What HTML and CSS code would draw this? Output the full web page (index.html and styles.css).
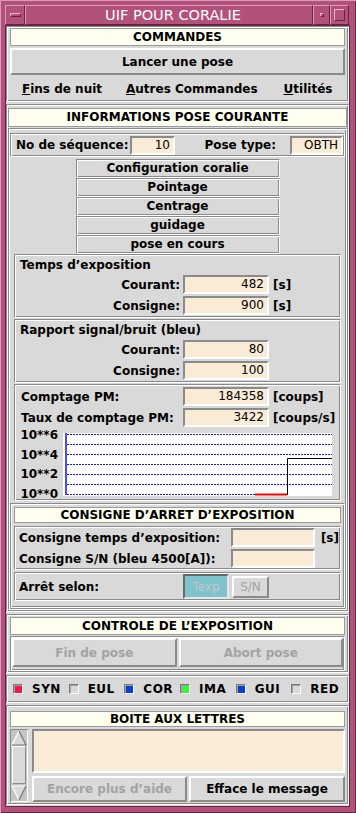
FILE: index.html
```html
<!DOCTYPE html>
<html>
<head>
    <meta charset="UTF-8">
    <title>UIF POUR CORALIE</title>
    <link rel="stylesheet" href="styles.css">
</head>
<body>
<div class="window">
    <div class="titlebar">
        <div class="wm-btn wm-menu"><span class="wm-bar"></span></div>
        <div class="wm-title">UIF POUR CORALIE</div>
        <div class="wm-btn wm-min"><span class="wm-dot"></span></div>
        <div class="wm-btn wm-max"><span class="wm-box"></span></div>
    </div>

    <div class="client">
        <!-- commandes -->
        <div class="group cmd">
            <div class="header">COMMANDES</div>
            <button class="btn big">Lancer une pose</button>
            <div class="menubar">
                <span class="m1"><u>F</u>ins de nuit</span>
                <span class="m2"><u>A</u>utres Commandes</span>
                <span class="m3"><u>U</u>tilités</span>
            </div>
        </div>

        <!-- informations pose courante -->
        <div class="group info">
            <div class="header h19">INFORMATIONS POSE COURANTE</div>
            <div class="frame info-body">
                <div class="frame seq-row">
                    <span class="seq-lbl">No de séquence:</span>
                    <span class="field seq">10</span>
                    <span class="pose-lbl">Pose type:</span>
                    <span class="field pose">OBTH</span>
                </div>

                <div class="tabs">
                    <div class="tab">Configuration coralie</div>
                    <div class="tab">Pointage</div>
                    <div class="tab">Centrage</div>
                    <div class="tab">guidage</div>
                    <div class="tab">pose en cours</div>
                </div>

                <div class="frame sub">
                    <div class="sub-title">Temps d’exposition</div>
                    <div class="row r1"><span class="rlbl">Courant:</span><span class="field num">482</span><span class="unit">[s]</span></div>
                    <div class="row r2"><span class="rlbl">Consigne:</span><span class="field num">900</span><span class="unit">[s]</span></div>
                </div>

                <div class="frame sub">
                    <div class="sub-title">Rapport signal/bruit (bleu)</div>
                    <div class="row r1"><span class="rlbl">Courant:</span><span class="field num">80</span></div>
                    <div class="row r2"><span class="rlbl">Consigne:</span><span class="field num">100</span></div>
                </div>

                <div class="frame sub pm">
                    <div class="row r1"><span class="rlbl left">Comptage PM:</span><span class="field num">184358</span><span class="unit">[coups]</span></div>
                    <div class="row r2"><span class="rlbl left">Taux de comptage PM:</span><span class="field num">3422</span><span class="unit">[coups/s]</span></div>
                    <svg class="graph" width="324" height="74" viewBox="0 0 324 74">
                        <rect x="47" y="6" width="269" height="63" fill="#ffffff"/>
                        <g stroke="#1414ff" stroke-width="1" stroke-dasharray="2 1">
                            <line x1="51" y1="7.5" x2="316" y2="7.5"/>
                            <line x1="51" y1="17.5" x2="316" y2="17.5"/>
                            <line x1="51" y1="27.5" x2="316" y2="27.5"/>
                            <line x1="51" y1="37.5" x2="316" y2="37.5"/>
                            <line x1="51" y1="47.5" x2="316" y2="47.5"/>
                            <line x1="51" y1="57.5" x2="316" y2="57.5"/>
                            <line x1="51" y1="67.5" x2="239" y2="67.5"/>
                        </g>
                        <rect x="49" y="6" width="2" height="62" fill="#4a4aff"/>
                        <rect x="239" y="66.5" width="32" height="2" fill="#ff0000"/>
                        <polyline points="271.5,68 271.5,31.5 316,31.5" fill="none" stroke="#000" stroke-width="1"/>
                        <g class="axis">
                            <text x="42" y="12" text-anchor="end">10**6</text>
                            <text x="42" y="32" text-anchor="end">10**4</text>
                            <text x="42" y="51" text-anchor="end">10**2</text>
                            <text x="42" y="71" text-anchor="end">10**0</text>
                        </g>
                    </svg>
                </div>

                <div class="frame stop">
                    <div class="header h16">CONSIGNE D’ARRET D’EXPOSITION</div>
                    <div class="frame stop-vals">
                        <div class="row"><span class="slbl">Consigne temps d’exposition:</span><span class="field sfield"></span><span class="unit su">[s]</span></div>
                        <div class="row r2"><span class="slbl">Consigne S/N (bleu 4500[A]):</span><span class="field sfield"></span></div>
                    </div>
                    <div class="frame stop-mode">
                        <span class="mlbl">Arrêt selon:</span>
                        <span class="texp">Texp</span>
                        <span class="sn">S/N</span>
                    </div>
                </div>
            </div>
        </div>

        <!-- controle -->
        <div class="group ctl">
            <div class="header">CONTROLE DE L’EXPOSITION</div>
            <div class="frame ctl-btns">
                <button class="btn off">Fin de pose</button>
                <button class="btn off">Abort pose</button>
            </div>
        </div>

        <!-- etats -->
        <div class="group status">
            <span class="led"><i class="sq red"></i>SYN</span>
            <span class="led"><i class="sq"></i>EUL</span>
            <span class="led"><i class="sq blue"></i>COR</span>
            <span class="led"><i class="sq green"></i>IMA</span>
            <span class="led"><i class="sq blue"></i>GUI</span>
            <span class="led"><i class="sq"></i>RED</span>
        </div>

        <!-- boite aux lettres -->
        <div class="group mail">
            <div class="header h16">BOITE AUX LETTRES</div>
            <div class="mail-row">
                <svg class="scroll" width="18" height="73" viewBox="0 0 18 73">
                    <rect x="0" y="0" width="18" height="73" fill="#c4c4c4"/>
                    <path d="M0.5 73 V0.5 H18" fill="none" stroke="#8a8a8a"/>
                    <path d="M1 72.5 H17.5 V1" fill="none" stroke="#ffffff"/>
                    <polygon points="9,2 16,16 2,16" fill="#d9d9d9"/>
                    <path d="M2 16 L9 2" stroke="#ffffff" stroke-width="1.2"/>
                    <path d="M9 2 L16 16 H2" fill="none" stroke="#7a7a7a" stroke-width="1.2"/>
                    <rect x="2" y="17" width="14" height="38" fill="#d9d9d9"/>
                    <path d="M2.5 55 V17.5 H16" fill="none" stroke="#ffffff"/>
                    <path d="M2.5 54.5 H15.5 V17.5" fill="none" stroke="#8a8a8a"/>
                    <polygon points="2,57 16,57 9,71" fill="#d9d9d9"/>
                    <path d="M9 71 L2 57 H16" fill="none" stroke="#ffffff" stroke-width="1.2"/>
                    <path d="M16 57 L9 71" stroke="#7a7a7a" stroke-width="1.2"/>
                </svg>
                <div class="mail-main">
                    <div class="field mail-text"></div>
                    <div class="mail-btns">
                        <button class="btn off">Encore plus d’aide</button>
                        <button class="btn">Efface le message</button>
                    </div>
                </div>
            </div>
        </div>
    </div>
</div>
</body>
</html>
```

FILE: styles.css
```css
* {
    box-sizing: border-box;
}

body {
    margin: 0;
    background: #b3517d;
    font-family: "DejaVu Sans", Verdana, sans-serif;
    font-size: 12px;
    font-weight: bold;
    color: #000;
}

/* window manager frame */
.window {
    width: 356px;
    height: 813px;
    padding: 0 7px 7px 6px;
    display: flex;
    flex-direction: column;
    background: #b3517d;
    box-shadow: inset 1px 1px #dc9bba, inset -1px -1px #6a2244;
}

.titlebar {
    display: flex;
    height: 26px;
    padding: 5px 0 1px;
    margin-left: -1px;
}

.wm-btn,
.wm-title {
    height: 20px;
    border: 1px solid;
    border-color: #dc9bba #6a2244 #6a2244 #dc9bba;
    display: flex;
    align-items: center;
    justify-content: center;
}

.wm-menu {
    width: 20px;
}

.wm-bar {
    width: 11px;
    height: 4px;
    border: 1px solid;
    border-color: #e8b3cb #6a2244 #6a2244 #e8b3cb;
}

.wm-title {
    flex: 1;
    padding-left: 8px;
    color: #fff;
    font-weight: normal;
    font-size: 14.5px;
}

.wm-min {
    width: 17px;
}

.wm-dot {
    width: 4px;
    height: 4px;
    border: 1px solid;
    border-color: #e8b3cb #6a2244 #6a2244 #e8b3cb;
}

.wm-max {
    width: 19px;
}

.wm-box {
    width: 11px;
    height: 12px;
    border: 1px solid;
    border-color: #e8b3cb #6a2244 #6a2244 #e8b3cb;
}

/* client area */
.client {
    flex: 1;
    display: flex;
    flex-direction: column;
    gap: 2px;
    background: #d9d9d9;
    outline: 1px solid #6a2244;
}

.group,
.frame,
.tab {
    border: 1px solid;
    border-color: #8a8a8a #fff #fff #8a8a8a;
    box-shadow: inset 1px 1px #fff, inset -1px -1px #8a8a8a;
    padding: 1px;
}

.header {
    height: 18px;
    line-height: 16px;
    background: #fffff0;
    border: 1px solid #9a9a9a;
    text-align: center;
}

.h19 {
    height: 19px;
    line-height: 17px;
}

.h16 {
    height: 16px;
    line-height: 14px;
}

.btn {
    display: block;
    font-family: inherit;
    font-size: 12px;
    font-weight: bold;
    color: #000;
    background: #d9d9d9;
    border: 2px solid;
    border-color: #fff #8a8a8a #8a8a8a #fff;
    padding: 0;
}

.btn.off {
    color: #a3a3a3;
}

.field {
    display: block;
    height: 19px;
    line-height: 15px;
    padding-right: 3px;
    background: #faebd7;
    border: 2px solid;
    border-color: #8a8a8a #fff #fff #8a8a8a;
    font-weight: normal;
    text-align: right;
}

/* commandes */
.cmd {
    height: 76px;
    padding: 1px 3px;
}

.big {
    width: 100%;
    height: 27px;
    margin-top: 2px;
}

.menubar {
    display: flex;
    align-items: center;
    height: 25px;
    padding-top: 3px;
}

.m1 {
    margin-left: 12px;
}

.m2 {
    margin-left: 24px;
}

.m3 {
    margin-left: 26px;
}

/* informations pose courante */
.info {
    height: 508px;
    padding: 3px 1px 1px;
}

.info-body {
    height: 482px;
    margin-top: 1px;
    padding: 4px 1px 1px;
}

.seq-row {
    display: flex;
    align-items: center;
    height: 24px;
    padding-left: 5px;
}

.seq-lbl {
    width: 114px;
}

.seq {
    width: 45px;
}

.pose-lbl {
    margin-left: auto;
    margin-right: 14px;
}

.pose {
    width: 53px;
    height: 19px;
}

.tabs {
    display: flex;
    flex-direction: column;
    align-items: center;
    height: 95px;
    margin-top: 2px;
}

.tab {
    width: 204px;
    height: 19px;
    line-height: 15px;
    text-align: center;
}

.sub {
    height: 64px;
    margin: 0 4px;
    padding: 1px 1px 0;
}

.sub + .sub {
    margin-top: 1px;
}

.sub-title {
    height: 18px;
    line-height: 18px;
    padding-left: 4px;
}

.row {
    display: flex;
    align-items: center;
    height: 19px;
}

.sub .r1 {
    margin-top: 1px;
}

.row.r2 {
    margin-top: 2px;
}

.rlbl {
    width: 164px;
    text-align: right;
}

.rlbl.left {
    text-align: left;
    padding-left: 5px;
}

.num {
    width: 86px;
    margin-left: 3px;
}

.unit {
    margin-left: 4px;
}

.pm {
    height: 117px;
}

.graph {
    display: block;
}

.axis text {
    font-family: "DejaVu Sans", Verdana, sans-serif;
    font-size: 12px;
    font-weight: bold;
    fill: #000;
}

/* consigne d'arret */
.stop {
    height: 105px;
    margin-top: 2px;
    padding: 3px;
}

.stop-vals {
    height: 44px;
    margin-top: 3px;
}

.slbl {
    width: 215px;
    padding-left: 3px;
}

.sfield {
    width: 84px;
}

.su {
    margin-left: 6px;
}

.stop-mode {
    display: flex;
    align-items: center;
    height: 29px;
    margin-top: 2px;
}

.mlbl {
    width: 167px;
    padding-left: 3px;
}

.texp,
.sn {
    display: flex;
    align-items: center;
    justify-content: center;
    font-weight: normal;
    color: #a3a3a3;
}

.texp {
    width: 46px;
    height: 25px;
    background: #7fc4cd;
    border: 2px solid;
    border-color: #6a6a6a #e6e6e6 #e6e6e6 #6a6a6a;
    color: #c2c8c9;
}

.sn {
    width: 37px;
    height: 22px;
    margin-left: 3px;
    border: 2px solid;
    border-color: #fff #8a8a8a #8a8a8a #fff;
}

/* controle */
.ctl {
    height: 59px;
    padding: 2px 3px 1px;
}

.ctl-btns {
    display: flex;
    gap: 2px;
    height: 35px;
    margin-top: 1px;
}

.ctl-btns .btn {
    flex: 1;
    height: 29px;
}

/* etats */
.status {
    display: flex;
    align-items: center;
    height: 28px;
    padding-left: 6px;
}

.led {
    display: flex;
    align-items: center;
    width: 57px;
    font-size: 12px;
    letter-spacing: 0.5px;
}

.sq {
    width: 10px;
    height: 10px;
    margin-right: 9px;
    background: #d9d9d9;
    border: 1px solid;
    border-color: #7a7a7a #fff #fff #7a7a7a;
    box-shadow: inset 1px 1px #a0a0a0;
}

.sq.red {
    background: #f01846;
}

.sq.blue {
    background: #0a40d2;
}

.sq.green {
    background: #3cf03c;
}

/* boite aux lettres */
.mail {
    height: 100px;
    padding: 5px 3px 1px;
}

.mail-row {
    display: flex;
    gap: 4px;
    height: 73px;
    margin-top: 2px;
}

.scroll {
    display: block;
    flex: none;
}

.mail-main {
    flex: 1;
}

.mail-text {
    height: 44px;
}

.mail-btns {
    display: flex;
    gap: 2px;
    margin-top: 3px;
}

.mail-btns .btn {
    height: 26px;
}

.mail-btns .off {
    width: 155px;
}

.mail-btns .btn + .btn {
    flex: 1;
}
```
